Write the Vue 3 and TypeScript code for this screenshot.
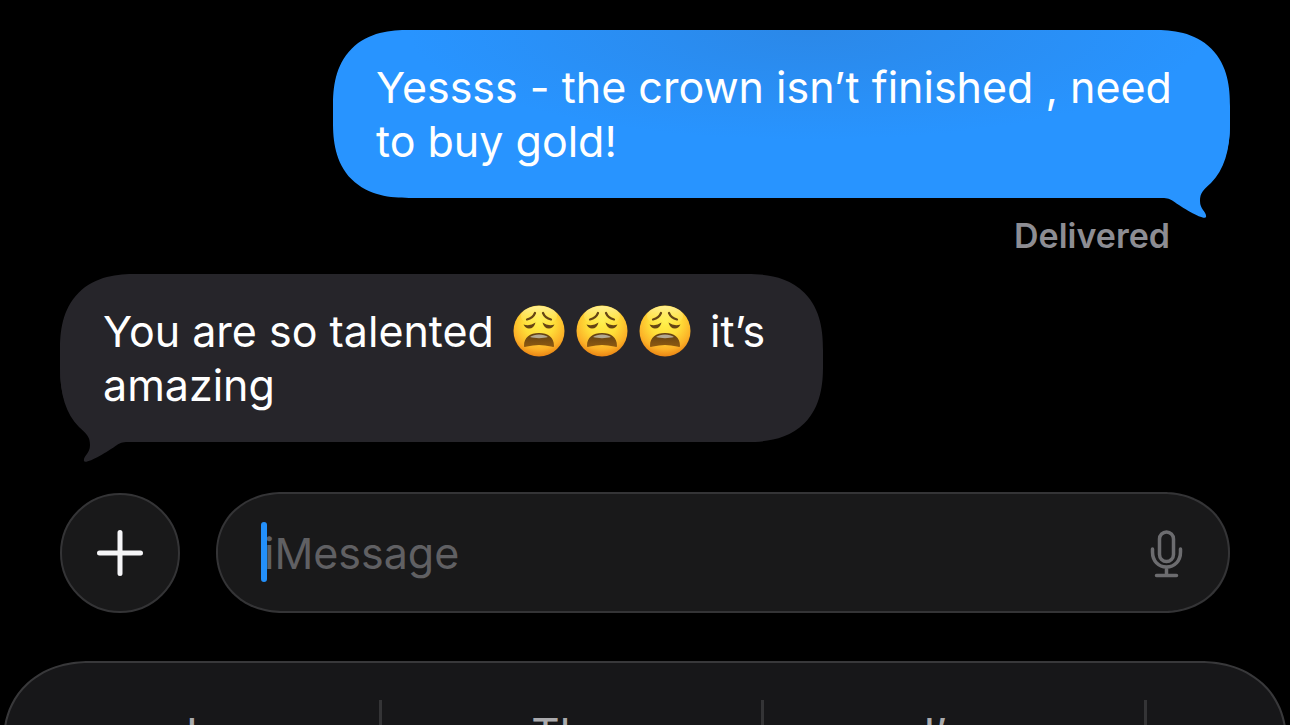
<script setup lang="ts">
import { ref } from 'vue'

const draft = ref('')
const faces = [1, 2, 3]
const suggestions = ['I', 'The', 'I’m']
</script>

<template>
  <main class="screen">
    <section class="thread" aria-label="Conversation">
      <div class="bubble sent">
        <svg class="tail" viewBox="0 0 80 104" aria-hidden="true">
          <path d="M0 10H80C80 36 74 56 61 69C53 76 50 79 50 87C50 96 57 98 56 103C55 107 34 95 23 87C20 85 18 84 12 84H0Z" />
        </svg>
        <p>Yessss - the crown isn’t finished , need to buy gold!</p>
      </div>
      <div class="status">Delivered</div>
      <div class="bubble received">
        <svg class="tail" viewBox="0 0 80 104" aria-hidden="true">
          <path d="M0 10H80C80 36 74 56 61 69C53 76 50 79 50 87C50 96 57 98 56 103C55 107 34 95 23 87C20 85 18 84 12 84H0Z" />
        </svg>
        <p>You are so talented <span class="faces"><svg v-for="n in faces" :key="n" class="face" viewBox="0 0 52 52" role="img" aria-label="weary face">
          <defs>
            <radialGradient :id="'skin' + n" cx="50%" cy="32%" r="68%">
              <stop offset="0" stop-color="#fff04a" />
              <stop offset="0.45" stop-color="#ffdd38" />
              <stop offset="0.8" stop-color="#fbb027" />
              <stop offset="1" stop-color="#ea8514" />
            </radialGradient>
            <linearGradient :id="'shine' + n" x1="0" y1="0" x2="0" y2="1">
              <stop offset="0" stop-color="#fffbd0" stop-opacity="0.6" />
              <stop offset="1" stop-color="#fff36b" stop-opacity="0" />
            </linearGradient>
            <linearGradient :id="'mouth' + n" x1="0" y1="0" x2="0" y2="1">
              <stop offset="0" stop-color="#5f3e14" />
              <stop offset="1" stop-color="#8f5b10" />
            </linearGradient>
          </defs>
          <circle cx="26" cy="26" r="25.5" :fill="'url(#skin' + n + ')'" />
          <ellipse cx="26" cy="11" rx="18" ry="10" :fill="'url(#shine' + n + ')'" />
          <g fill="none" stroke="#654514" stroke-width="2.2" stroke-linecap="round">
            <path d="M14 14.5Q20 13 22 8" />
            <path d="M30 8Q32 13 38 14.5" />
          </g>
          <path d="M10.500 19.500Q17 21.500 22.500 17.500Q21 23.500 16 23.500Q12.500 23.500 10.500 19.500Z" fill="#654514" />
          <path d="M41.500 19.500Q35 21.500 29.500 17.500Q31 23.500 36 23.500Q39.500 23.500 41.500 19.500Z" fill="#654514" />
          <path d="M11 41C11 32 17 28 26 28C35 28 41 32 41 41C41 42.500 39.500 42 38 41.500C30 39.500 22 39.500 14 41.500C12.500 42 11 42.500 11 41Z" :fill="'url(#mouth' + n + ')'" />
          <path d="M17 32C21 28.500 31 28.500 35 32C30 33.500 22 33.500 17 32Z" fill="#b3a892" />
        </svg></span> it’s amazing</p>
      </div>
    </section>

    <form class="composer" @submit.prevent>
      <button class="add" type="button" aria-label="Add attachment">
        <svg viewBox="0 0 48 48" aria-hidden="true"><path d="M24 3.500V44.500M3.500 24H44.500" /></svg>
      </button>
      <div class="field">
        <input v-model="draft" type="text" placeholder="iMessage" aria-label="Message" />
        <span class="caret" />
        <button class="mic" type="button" aria-label="Dictate">
          <svg viewBox="0 0 34 48" aria-hidden="true">
            <rect x="9.500" y="3" width="14" height="29.500" rx="7" />
            <path d="M2.500 20V23C2.500 32 8.500 38 16.500 38C24.500 38 30.500 32 30.500 23V20M16.500 38V46.500M6.500 46.500H26.500" />
          </svg>
        </button>
      </div>
    </form>

    <section class="keyboard" aria-label="Suggestions">
      <button v-for="word in suggestions" :key="word" type="button" class="suggestion">{{ word }}</button>
    </section>
  </main>
</template>

<style>
body {
  margin: 0;
  background: #000;
}
</style>

<style scoped>
.screen {
  box-sizing: border-box;
  display: flex;
  flex-direction: column;
  height: 100vh;
  padding-top: 30px;
  overflow: hidden;
  background: #000;
  color: #fff;
  font-family: Inter, "Liberation Sans", sans-serif;
  font-size: 43px;
  line-height: 54px;
}

button,
input {
  margin: 0;
  padding: 0;
  border: 0;
  background: none;
  color: inherit;
  font: inherit;
}

.thread {
  display: flex;
  flex-direction: column;
  padding: 0 60px;
}

.bubble {
  --fill: #2894ff;
  position: relative;
  box-sizing: border-box;
  max-width: 897px;
  padding: 30px 43px;
  border-radius: 60px;
  background: var(--fill);
}

.bubble p {
  position: relative;
  margin: 0;
}

.sent {
  align-self: flex-end;
  background: radial-gradient(ellipse 400px 110px at 53% 0, #2b88e8, var(--fill));
}

.received {
  --fill: #26252a;
  align-self: flex-start;
  max-width: 763px;
}

.tail {
  position: absolute;
  right: 0;
  bottom: -20px;
  width: 80px;
  height: 104px;
  fill: var(--fill);
}

.received .tail {
  right: auto;
  left: 0;
  transform: scaleX(-1);
}

.status {
  align-self: flex-end;
  margin: 18px 60px 18px 0;
  color: #8d8d93;
  font-size: 34px;
  font-weight: 600;
  line-height: 40px;
}

.faces {
  display: inline-flex;
  gap: 11px;
  margin: 0 7px;
  vertical-align: -10px;
}

.face {
  width: 52px;
  height: 52px;
  margin: -4px 0;
}

.composer {
  display: flex;
  gap: 36px;
  align-items: flex-end;
  padding: 0 60px;
  margin-top: 50px;
}

.add,
.field {
  box-sizing: border-box;
  height: 120px;
  border: 2px solid #343436;
  background: #19191a;
}

.add {
  display: grid;
  flex: none;
  place-items: center;
  width: 120px;
  border-radius: 50%;
}

.add svg {
  width: 48px;
  height: 48px;
  fill: none;
  stroke: #f5f5f7;
  stroke-width: 5;
  stroke-linecap: round;
}

.field {
  position: relative;
  display: flex;
  flex: 1;
  align-items: center;
  height: 121px;
  padding: 0 44px 0 46px;
  border-radius: 60px;
}

.field input {
  flex: 1;
  min-width: 0;
  height: 60px;
  outline: none;
}

.field input::placeholder {
  color: #606063;
  opacity: 1;
}

.caret {
  position: absolute;
  top: 28px;
  left: 43px;
  width: 6px;
  height: 60px;
  border-radius: 3px;
  background: #2390fb;
}

.mic {
  display: flex;
}

.mic svg {
  width: 34px;
  height: 48px;
  overflow: visible;
  fill: none;
  stroke: #6c6c6f;
  stroke-width: 3.5;
  stroke-linecap: round;
}

.keyboard {
  display: grid;
  flex: none;
  grid-template-columns: 376fr 382fr 382fr 138fr;
  margin: 48px 3px 0;
  padding: 37px 0;
  border: 2px solid #38383a;
  border-radius: 78px 78px 0 0;
  background: #171719;
}

.suggestion {
  height: 68px;
  border-right: 3px solid #343436;
  color: #aaaaad;
  font-size: 44px;
}

@supports (corner-shape: superellipse(1.3)) {
  .bubble {
    border-radius: 76px;
    corner-shape: superellipse(1.3);
  }

  .field {
    border-radius: 66px / 60px;
    corner-shape: superellipse(1.05);
  }

  .keyboard {
    border-radius: 86px 86px 0 0 / 80px 80px 0 0;
    corner-shape: superellipse(1.1);
  }
}
</style>
